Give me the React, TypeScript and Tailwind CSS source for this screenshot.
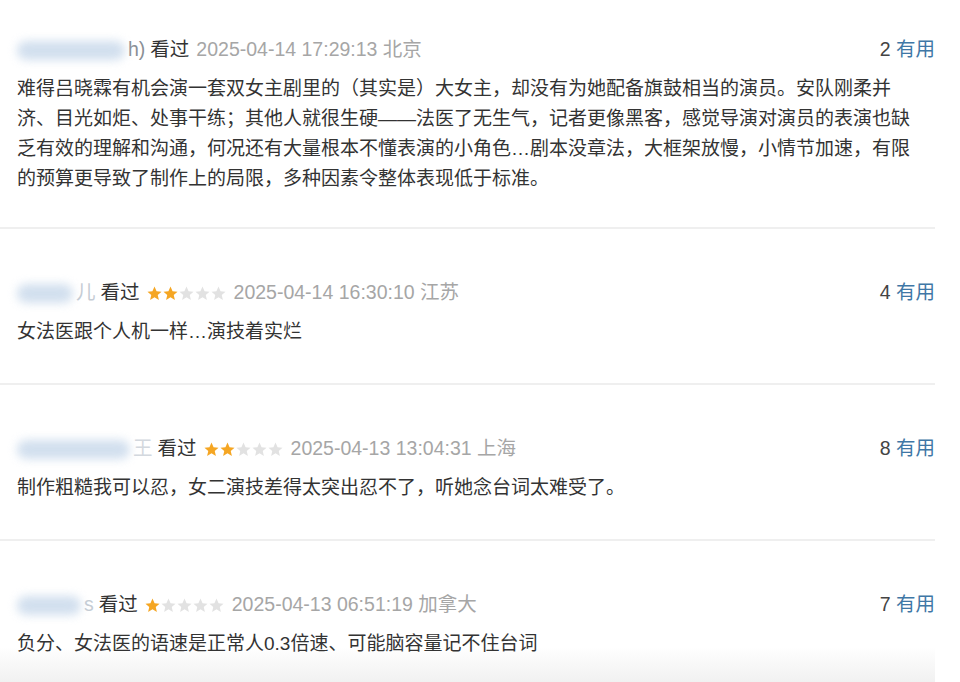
import React from 'react';

interface Review {
  blurWidth: number;
  tail: string;
  tailClass: string;
  stars: number | null;
  time: string;
  place: string;
  votes: number;
  lines: string[];
}

const reviews: Review[] = [
  {
    blurWidth: 108,
    tail: 'h)',
    tailClass: 'text-[#8a8f96]',
    stars: null,
    time: '2025-04-14 17:29:13',
    place: '北京',
    votes: 2,
    lines: [
      '难得吕晓霖有机会演一套双女主剧里的（其实是）大女主，却没有为她配备旗鼓相当的演员。安队刚柔并',
      '济、目光如炬、处事干练；其他人就很生硬——法医了无生气，记者更像黑客，感觉导演对演员的表演也缺',
      '乏有效的理解和沟通，何况还有大量根本不懂表演的小角色…剧本没章法，大框架放慢，小情节加速，有限',
      '的预算更导致了制作上的局限，多种因素令整体表现低于标准。',
    ],
  },
  {
    blurWidth: 56,
    tail: '儿',
    tailClass: 'text-[#c5ccd4]',
    stars: 2,
    time: '2025-04-14 16:30:10',
    place: '江苏',
    votes: 4,
    lines: ['女法医跟个人机一样…演技着实烂'],
  },
  {
    blurWidth: 113,
    tail: '王',
    tailClass: 'text-[#d3d8de]',
    stars: 2,
    time: '2025-04-13 13:04:31',
    place: '上海',
    votes: 8,
    lines: ['制作粗糙我可以忍，女二演技差得太突出忍不了，听她念台词太难受了。'],
  },
  {
    blurWidth: 64,
    tail: 's',
    tailClass: 'text-[#c5ccd4]',
    stars: 1,
    time: '2025-04-13 06:51:19',
    place: '加拿大',
    votes: 7,
    lines: ['负分、女法医的语速是正常人0.3倍速、可能脑容量记不住台词'],
  },
];

const Star = ({ filled }: { filled: boolean }) => (
  <svg viewBox="0 0 24 24" className="w-[17px] h-[17px] -mx-[0.5px]">
    <path
      d="M12 2.2l2.9 6.5 7 .7-5.3 4.7 1.6 6.9L12 17.4 5.8 21l1.6-6.9L2.1 9.4l7-.7z"
      fill={filled ? '#f5a623' : '#e2e2e2'}
    />
  </svg>
);

const ReviewItem = ({ review, first, last }: { review: Review; first: boolean; last: boolean }) => (
  <div
    className={`pl-[17px] ${first ? 'pt-[36px] pb-[33px]' : 'pt-[50px]'} ${last ? 'pb-[23px] bg-gradient-to-b from-white from-75% to-[#f1f1f1]' : ''} ${!first && !last ? 'pb-[36px]' : ''}`}
  >
    <div className="flex items-center h-[28px] text-[19.5px]">
      <span className="inline-block h-[19px] rounded-full bg-[#c6d7ea] blur-[5px] opacity-80" style={{ width: review.blurWidth }} />
      <span className={`ml-[3px] ${review.tailClass}`}>{review.tail}</span>
      <span className="ml-[5px] text-[#333]">看过</span>
      {review.stars !== null && (
        <span className="ml-[7px] flex items-center">
          {[0, 1, 2, 3, 4].map((i) => (
            <Star key={i} filled={i < (review.stars ?? 0)} />
          ))}
        </span>
      )}
      <span className="ml-[7px] text-[#a6a6a6]">
        {review.time} {review.place}
      </span>
      <span className="ml-auto text-[#444]">
        {review.votes} <span className="text-[#3f77a6]">有用</span>
      </span>
    </div>
    <div className="mt-[10px] text-[19px] leading-[30px] text-[#333]">
      {review.lines.map((line, i) => (
        <div key={i} className="whitespace-nowrap">{line}</div>
      ))}
    </div>
  </div>
);

export default function App() {
  return (
    <div
      className="w-[960px] h-[682px] overflow-hidden bg-white"
      style={{ fontFamily: '"Liberation Sans", "Noto Sans CJK SC", sans-serif' }}
    >
      <div className="w-[935px]">
        {reviews.map((r, i) => (
          <div key={i} className={i > 0 ? 'border-t-2 border-[#efefef]' : ''}>
            <ReviewItem review={r} first={i === 0} last={i === reviews.length - 1} />
          </div>
        ))}
      </div>
    </div>
  );
}
